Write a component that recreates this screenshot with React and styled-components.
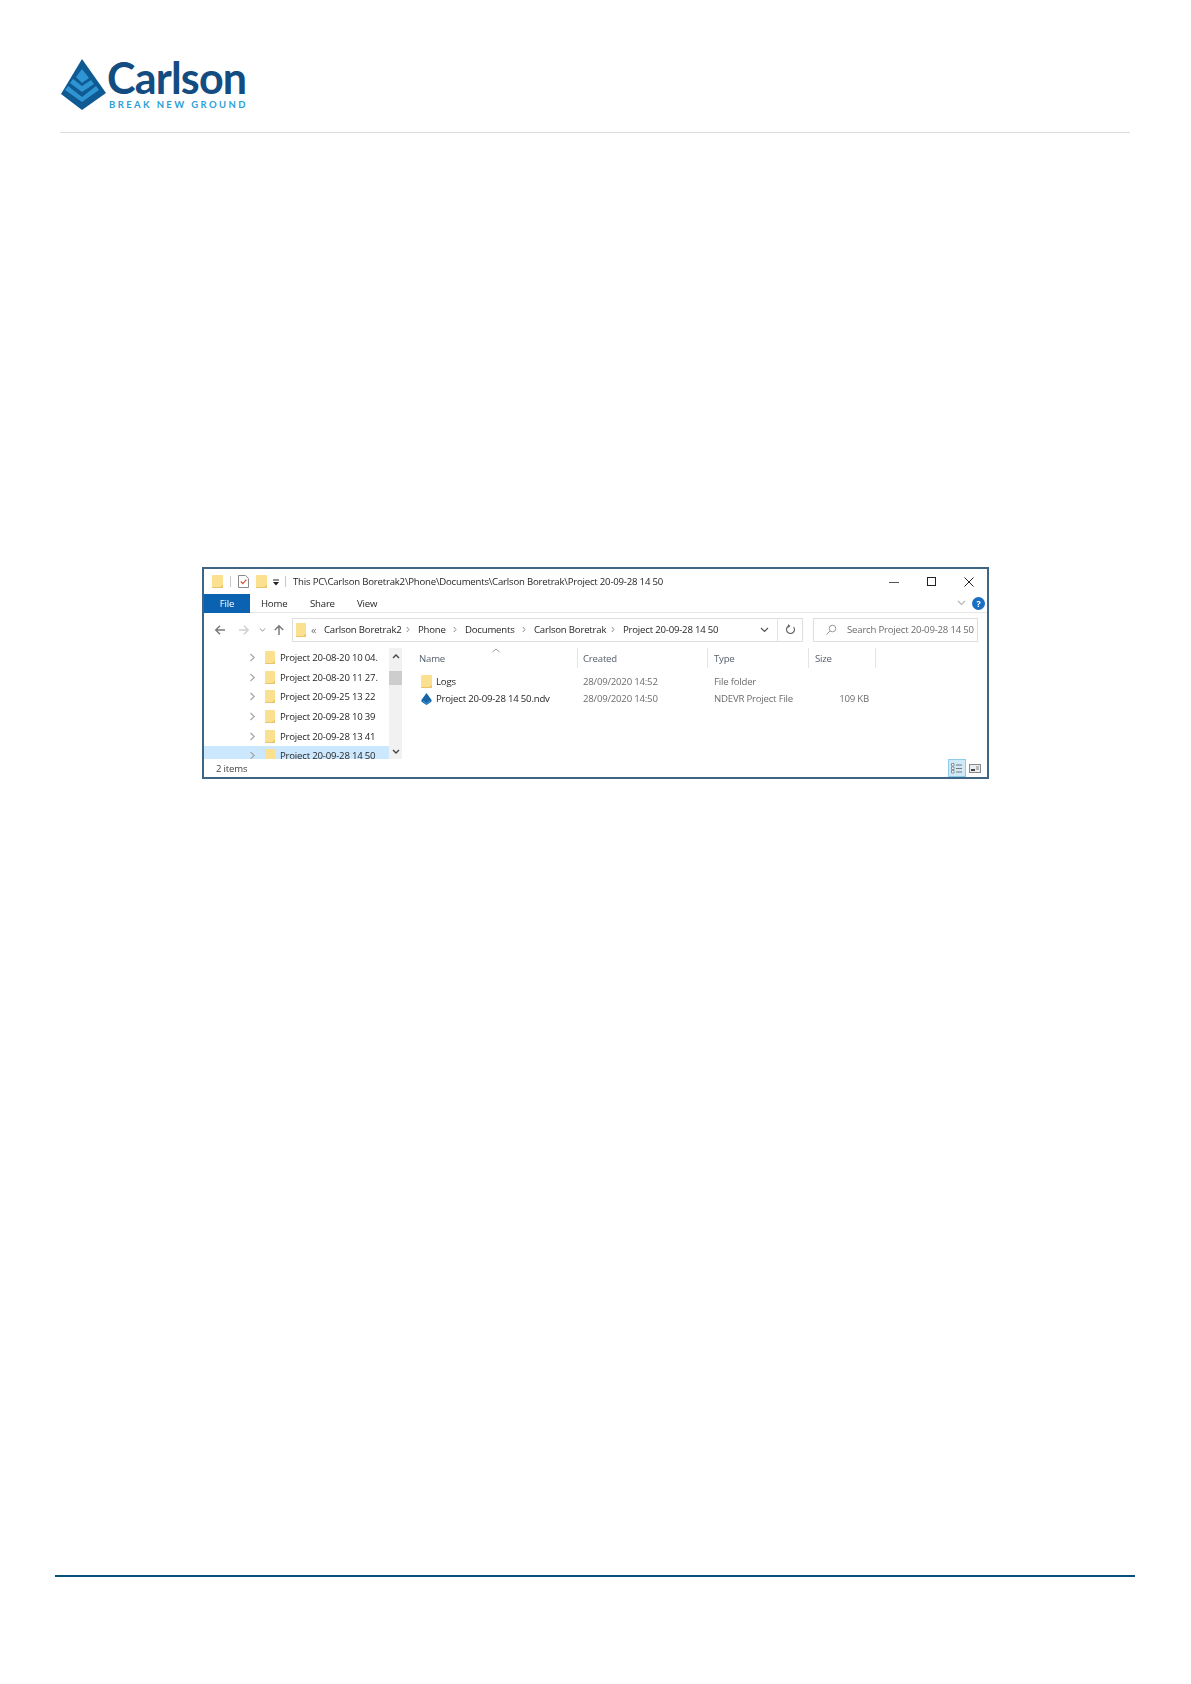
import React from 'react';
import styled, { createGlobalStyle } from 'styled-components';

const TREE_ROWS = [
  'Project 20-08-20 10 04.',
  'Project 20-08-20 11 27.',
  'Project 20-09-25 13 22',
  'Project 20-09-28 10 39',
  'Project 20-09-28 13 41',
  'Project 20-09-28 14 50',
];

const CRUMBS = [
  { label: 'Carlson Boretrak2', width: 94 },
  { label: 'Phone', width: 47 },
  { label: 'Documents', width: 69 },
  { label: 'Carlson Boretrak', width: 89 },
  { label: 'Project 20-09-28 14 50', width: 120 },
];

const GlobalStyle = createGlobalStyle`
  html, body {
    margin: 0;
    padding: 0;
    background: #fff;
  }
`;

const Page = styled.div`
  width: 1191px;
  height: 1684px;
  padding-top: 58px;
  box-sizing: border-box;
  overflow: hidden;
  font-family: "Open Sans", "Liberation Sans", sans-serif;
`;

const Header = styled.header`
  display: flex;
  align-items: flex-start;
  height: 74px;
  margin: 0 61px 0 60px;
  border-bottom: 1px solid #dcdcdc;
`;

const LogoText = styled.div`
  display: flex;
  flex-direction: column;
  padding-top: 1px;
`;

const LogoName = styled.div`
  font-family: Lato, "Open Sans", sans-serif;
  font-size: 43px;
  font-weight: 700;
  line-height: 38px;
  letter-spacing: -0.8px;
  color: #124c80;
`;

const LogoTag = styled.div`
  margin: 3px 0 0 2px;
  font-family: Lato, "Open Sans", sans-serif;
  font-size: 9.5px;
  font-weight: 700;
  line-height: 10px;
  letter-spacing: 2.4px;
  white-space: nowrap;
  color: #2b9fd6;
`;

const Window = styled.section`
  width: 787px;
  height: 212px;
  margin: 434px 0 0 202px;
  box-sizing: border-box;
  border: 2px solid #3f6584;
  display: flex;
  flex-direction: column;
  font-size: 9.6px;
  letter-spacing: -0.2px;
  color: #262626;
  filter: blur(0.3px);
`;

const TitleBar = styled.div`
  height: 25px;
  flex: none;
  display: flex;
  align-items: center;
  padding-left: 8px;
`;

const TitleText = styled.span`
  margin-left: 2px;
  white-space: nowrap;
  flex: 1;
`;

const TitleSep = styled.span`
  width: 1px;
  height: 11px;
  margin: 0 ${(p) => p.$gap || 6}px;
  background: #c8c8c8;
`;

const WindowButtons = styled.div`
  display: flex;
  align-items: center;
  gap: 25.5px;
  padding-right: 12px;
`;

const TabRow = styled.div`
  height: 19px;
  flex: none;
  display: flex;
  align-items: center;
  box-sizing: border-box;
  border-bottom: 1px solid #e6e6e6;
  padding-right: 2px;
`;

const FileTab = styled.div`
  width: 46px;
  height: 19px;
  margin-right: 11px;
  flex: none;
  display: flex;
  align-items: center;
  justify-content: center;
  background: #0a62b0;
  color: #fff;
`;

const Tab = styled.div`
  width: ${(p) => p.$width}px;
  flex: none;
`;

const Spacer = styled.div`
  flex: 1;
`;

const HelpBadge = styled.div`
  width: 13px;
  height: 13px;
  margin-left: 6px;
  border-radius: 50%;
  display: flex;
  align-items: center;
  justify-content: center;
  background: #1b6fc2;
  color: #fff;
  font-size: 9px;
  font-weight: 700;
`;

const AddressRow = styled.div`
  height: 35px;
  flex: none;
  box-sizing: border-box;
  display: flex;
  align-items: center;
  padding: 0 0 2px 10px;
`;

const NavIcons = styled.div`
  width: 78px;
  flex: none;
  display: flex;
  align-items: center;
`;

const NavGap = styled.span`
  width: ${(p) => p.$width}px;
  flex: none;
`;

const AddressBox = styled.div`
  width: 511px;
  height: 24px;
  flex: none;
  box-sizing: border-box;
  border: 1px solid #dedede;
  display: flex;
  align-items: center;
  padding-left: 3px;
`;

const Crumb = styled.span`
  width: ${(p) => p.$width}px;
  flex: none;
  display: flex;
  align-items: center;
  white-space: nowrap;
  color: #262626;
`;

const CrumbArrow = styled.span`
  margin-left: auto;
  margin-right: 8px;
  display: flex;
`;

const Quotes = styled.span`
  width: 13px;
  margin-left: 5px;
  flex: none;
  color: #777;
  font-size: 11px;
`;

const RefreshCell = styled.div`
  width: 24px;
  height: 22px;
  margin-left: 8px;
  flex: none;
  border-left: 1px solid #e2e2e2;
  display: flex;
  align-items: center;
  justify-content: center;
`;

const SearchBox = styled.div`
  width: 165px;
  height: 24px;
  margin-left: 10px;
  flex: none;
  box-sizing: border-box;
  border: 1px solid #dedede;
  display: flex;
  align-items: center;
  gap: 10px;
  padding-left: 11px;
  color: #6d6d6d;
  white-space: nowrap;
`;

const Panes = styled.div`
  height: 111px;
  flex: none;
  display: flex;
`;

const Tree = styled.div`
  width: 185px;
  flex: none;
  overflow: hidden;
`;

const TreeRow = styled.div`
  height: 19.6px;
  display: flex;
  align-items: center;
  padding-left: 45px;
  background: ${(p) => (p.$selected ? '#cce8ff' : 'transparent')};
  white-space: nowrap;
`;

const TreeFolder = styled.span`
  margin-left: 9px;
  display: flex;
`;

const TreeLabel = styled.span`
  margin-left: 5px;
`;

const Scrollbar = styled.div`
  width: 13px;
  flex: none;
  display: flex;
  flex-direction: column;
  align-items: center;
  background: #f1f1f1;
`;

const ScrollThumb = styled.div`
  width: 100%;
  height: 14px;
  margin-top: 12px;
  background: #cdcdcd;
`;

const ScrollEnd = styled.div`
  margin-top: auto;
  padding-bottom: 4px;
  display: flex;
`;

const ScrollStart = styled.div`
  padding-top: 5px;
  display: flex;
`;

const FileList = styled.div`
  flex: 1;
  padding-left: 11px;
`;

const ListColumns = styled.div`
  display: grid;
  grid-template-columns: 165px 130px 101px 67px;
`;

const HeadCell = styled.div`
  position: relative;
  height: 20px;
  display: flex;
  align-items: center;
  padding-left: ${(p) => p.$pad || 5}px;
  border-right: 1px solid #e5e5e5;
  color: #56606e;
`;

const SortCaret = styled.svg`
  position: absolute;
  top: 0;
  left: 79px;
`;

const Rows = styled.div`
  margin-top: 5px;
`;

const ListRow = styled(ListColumns)`
  height: 17px;
  align-items: center;
  color: #6d6d6d;
`;

const NameCell = styled.div`
  display: flex;
  align-items: center;
  gap: 4px;
  padding-left: 8px;
  color: #262626;
  white-space: nowrap;
`;

const DataCell = styled.div`
  padding-left: ${(p) => p.$pad || 5}px;
  white-space: nowrap;
`;

const SizeCell = styled.div`
  padding-right: 7px;
  text-align: right;
`;

const StatusBar = styled.div`
  flex: 1;
  display: flex;
  align-items: center;
  padding: 0 3px 0 12px;
  color: #444;
`;

const ViewButton = styled.div`
  width: 18px;
  height: 18px;
  flex: none;
  box-sizing: border-box;
  border: 1px solid ${(p) => (p.$active ? '#8ecbeb' : 'transparent')};
  background: ${(p) => (p.$active ? '#cfe9f8' : 'transparent')};
  display: flex;
  align-items: center;
  justify-content: center;
`;

const FooterRule = styled.div`
  width: 1080px;
  height: 2px;
  margin: 796px 0 0 55px;
  background: #04527c;
`;

const Pyramid = () => (
  <svg width="47" height="52" viewBox="0 0 47 52" style={{ flex: 'none', marginTop: 1 }}>
    <path d="M22 0 46 34 22 51 1 35Z" fill="#0f5a93" />
    <path d="M22 10 29 19 22 24 16 18Z" fill="#2e95d2" />
    <path d="M13 20 22 27 31 21 34 25 22 33 10 24Z" fill="#2e95d2" />
    <path d="M8 27 22 38 36 27 39 31 22 43 5 31Z" fill="#2e95d2" />
  </svg>
);

const Folder = ({ w = 10, h = 13 }) => (
  <svg width={w} height={h} viewBox="0 0 10 14" preserveAspectRatio="none" style={{ flex: 'none' }}>
    <rect width="10" height="14" rx="0.8" fill="#fbe08f" />
    <path d="M0 13H7.5L10 10.5V13.2Q10 14 9.2 14H.8Q0 14 0 13Z" fill="#e9c468" />
  </svg>
);

const Chevron = ({ color = '#a6a6a6' }) => (
  <svg width="7" height="9" viewBox="0 0 7 9" style={{ flex: 'none' }}>
    <path d="M1.5 1 5.2 4.5 1.5 8" fill="none" stroke={color} strokeWidth="1.2" />
  </svg>
);

const SmallArrow = () => (
  <svg width="4" height="7" viewBox="0 0 4 7">
    <path d="M.8 1 3 3.5.8 6" fill="none" stroke="#8a8a8a" strokeWidth="1" />
  </svg>
);

const DownChevron = ({ color = '#666', w = 9 }) => (
  <svg width={w} height="6" viewBox="0 0 9 6" style={{ flex: 'none' }}>
    <path d="M1 1 4.5 4.5 8 1" fill="none" stroke={color} strokeWidth="1.2" />
  </svg>
);

const NavArrow = ({ rotate = 0, color = '#7a7a7a' }) => (
  <svg width="12" height="12" viewBox="0 0 12 12" style={{ flex: 'none', transform: `rotate(${rotate}deg)` }}>
    <path d="M11 6H2M6 1.8 1.8 6 6 10.2" fill="none" stroke={color} strokeWidth="1.5" />
  </svg>
);

const App = () => (
  <Page>
    <GlobalStyle />
    <Header>
      <Pyramid />
      <LogoText>
        <LogoName>Carlson</LogoName>
        <LogoTag>BREAK NEW GROUND</LogoTag>
      </LogoText>
    </Header>

    <Window>
      <TitleBar>
        <Folder w={11} h={13} />
        <TitleSep $gap={7} />
        <svg width="11" height="13" viewBox="0 0 11 13" style={{ flex: 'none' }}>
          <path d="M.5.5H7.5L10.5 3.5V12.5H.5Z" fill="#fff" stroke="#8a8a8a" />
          <path d="M2.8 6.5 4.8 8.6 8.4 4.6" fill="none" stroke="#d9532c" strokeWidth="1.2" />
        </svg>
        <NavGap $width={7} />
        <Folder w={11} h={13} />
        <svg width="8" height="8" viewBox="0 0 8 8" style={{ flex: 'none', marginLeft: 5 }}>
          <path d="M1 1.5H7V2.5H1ZM1 4H7L4 7.5Z" fill="#222" />
        </svg>
        <TitleSep $gap={5} />
        <TitleText>This PC\Carlson Boretrak2\Phone\Documents\Carlson Boretrak\Project 20-09-28 14 50</TitleText>
        <WindowButtons>
          <svg width="12" height="12" viewBox="0 0 12 12"><path d="M1 6.5H11" stroke="#555" /></svg>
          <svg width="12" height="12" viewBox="0 0 12 12"><rect x="1.5" y="1.5" width="8" height="8" fill="none" stroke="#222" /></svg>
          <svg width="12" height="12" viewBox="0 0 12 12"><path d="M1.5 1.5 10.5 10.5M10.5 1.5 1.5 10.5" stroke="#222" /></svg>
        </WindowButtons>
      </TitleBar>

      <TabRow>
        <FileTab>File</FileTab>
        <Tab $width={49}>Home</Tab>
        <Tab $width={47}>Share</Tab>
        <Tab $width={40}>View</Tab>
        <Spacer />
        <DownChevron color="#b5b5b5" />
        <HelpBadge>?</HelpBadge>
      </TabRow>

      <AddressRow>
        <NavIcons>
          <NavArrow />
          <NavGap $width={12} />
          <NavArrow rotate={180} color="#d0d0d0" />
          <NavGap $width={9} />
          <DownChevron color="#8a8a8a" w={7} />
          <NavGap $width={7} />
          <NavArrow rotate={90} />
        </NavIcons>
        <AddressBox>
          <Folder w={10} h={14} />
          <Quotes>«</Quotes>
          {CRUMBS.map((c, i) => (
            <Crumb key={c.label} $width={c.width}>
              {c.label}
              {i < CRUMBS.length - 1 && <CrumbArrow><SmallArrow /></CrumbArrow>}
            </Crumb>
          ))}
          <Spacer />
          <DownChevron color="#555" />
          <RefreshCell>
            <svg width="11" height="11" viewBox="0 0 11 11">
              <path d="M8.6 3A4 4 0 1 1 3.5 2" fill="none" stroke="#666" strokeWidth="1.2" />
              <path d="M3 0 5.5 2 3 4Z" fill="#666" />
            </svg>
          </RefreshCell>
        </AddressBox>
        <SearchBox>
          <svg width="12" height="12" viewBox="0 0 12 12" style={{ flex: 'none' }}>
            <circle cx="7.5" cy="4.5" r="3.3" fill="none" stroke="#999" />
            <path d="M5 7 1.5 10.5" stroke="#999" />
          </svg>
          Search Project 20-09-28 14 50
        </SearchBox>
      </AddressRow>

      <Panes>
        <Tree>
          {TREE_ROWS.map((row, i) => (
            <TreeRow key={row} $selected={i === 5}>
              <Chevron />
              <TreeFolder><Folder /></TreeFolder>
              <TreeLabel>{row}</TreeLabel>
            </TreeRow>
          ))}
        </Tree>
        <Scrollbar>
          <ScrollStart>
            <svg width="8" height="6" viewBox="0 0 8 6"><path d="M1 5 4 2 7 5" fill="none" stroke="#444" strokeWidth="1.4" /></svg>
          </ScrollStart>
          <ScrollThumb />
          <ScrollEnd>
            <svg width="8" height="6" viewBox="0 0 8 6"><path d="M1 1 4 4 7 1" fill="none" stroke="#444" strokeWidth="1.4" /></svg>
          </ScrollEnd>
        </Scrollbar>
        <FileList>
          <ListColumns>
            <HeadCell $pad={6}>
              Name
              <SortCaret width="8" height="5" viewBox="0 0 8 5">
                <path d="M.5 4 4 1 7.5 4" fill="none" stroke="#9a9a9a" />
              </SortCaret>
            </HeadCell>
            <HeadCell>Created</HeadCell>
            <HeadCell $pad={6}>Type</HeadCell>
            <HeadCell $pad={6}>Size</HeadCell>
          </ListColumns>
          <Rows>
            <ListRow>
              <NameCell><Folder w={11} h={13} />Logs</NameCell>
              <DataCell>28/09/2020 14:52</DataCell>
              <DataCell $pad={6}>File folder</DataCell>
              <SizeCell />
            </ListRow>
            <ListRow>
              <NameCell>
                <svg width="11" height="12" viewBox="0 0 11 12" style={{ flex: 'none' }}>
                  <path d="M5.5 0 9.5 5.5Q11.5 8 10 9L5.5 12 1 9Q-.5 8 1.5 5.5Z" fill="#1566a8" />
                  <path d="M2 8 5.5 10.6 9 8" fill="none" stroke="#5aa9dc" strokeWidth=".8" />
                </svg>
                Project 20-09-28 14 50.ndv
              </NameCell>
              <DataCell>28/09/2020 14:50</DataCell>
              <DataCell $pad={6}>NDEVR Project File</DataCell>
              <SizeCell>109 KB</SizeCell>
            </ListRow>
          </Rows>
        </FileList>
      </Panes>

      <StatusBar>
        2 items
        <Spacer />
        <ViewButton $active>
          <svg width="12" height="11" viewBox="0 0 12 11">
            <path d="M.5.5H3V3H.5ZM.5 4H3V6.5H.5ZM.5 7.5H3V10H.5Z" fill="#fff" stroke="#555" strokeWidth=".6" />
            <path d="M5 2H11M5 5.5H11M5 9H11" stroke="#777" />
          </svg>
        </ViewButton>
        <ViewButton>
          <svg width="12" height="9" viewBox="0 0 12 9">
            <rect x=".5" y=".5" width="11" height="8" fill="#e8eef2" stroke="#888" />
            <path d="M2 5H6V7H2Z" fill="#444" />
            <path d="M7 3H10M7 5H10" stroke="#888" />
          </svg>
        </ViewButton>
      </StatusBar>
    </Window>

    <FooterRule />
  </Page>
);

export default App;
